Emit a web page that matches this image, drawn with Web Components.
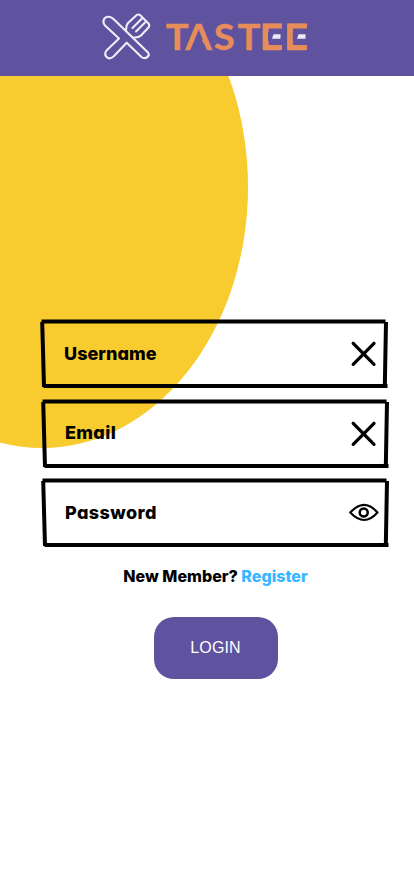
<!DOCTYPE html>
<html lang="en">
<head>
<meta charset="utf-8">
<title>Tastee</title>
<style>
html,body{margin:0;height:100%}
body{background:#fff;overflow:hidden;font-family:Inter,"Liberation Sans",sans-serif;color:#000}
</style>
</head>
<body>
<tastee-page>
  <tastee-header slot="header"></tastee-header>
  <sketch-field icon="cross" style="--x:42px;--inset:22px;--track:.05px">Username</sketch-field>
  <sketch-field icon="cross" style="--x:43px;--inset:22px;--track:.35px">Email</sketch-field>
  <sketch-field icon="eye" style="--x:43px;--inset:22px;--track:.4px">Password</sketch-field>
  <member-prompt slot="footer">New Member? <span slot="link">Register</span></member-prompt>
  <pill-button slot="footer">LOGIN</pill-button>
</tastee-page>
<script>
const define = (name, html, init) => customElements.define(name, class extends HTMLElement {
  constructor() {
    super();
    this.attachShadow({mode: 'open'}).innerHTML = html;
    if (init) init(this, this.shadowRoot);
  }
});

define('tastee-page', `
<style>
:host{display:flex;flex-direction:column;position:relative;width:414px;height:896px;overflow:hidden}
.blob{position:absolute;left:-164px;top:-74px;width:412px;height:522px;border-radius:50%;background:#f8cb2e}
.form{position:relative;display:flex;flex-direction:column;gap:9.7px;margin-top:242.6px}
.foot{position:relative;display:flex;flex-direction:column;align-items:center;gap:30px;margin-top:17.8px;padding-left:17px}
</style>
<div class="blob"></div>
<slot name="header"></slot>
<div class="form"><slot></slot></div>
<div class="foot"><slot name="footer"></slot></div>`);

define('tastee-header', `
<style>
:host{display:block;position:relative;height:75.5px;background:#5f529f}
svg{display:block}
text{font:700 36.5px Lato,sans-serif;fill:#e68d5b;stroke:#e68d5b;stroke-width:.3px}
</style>
<svg width="414" height="75" viewBox="0 0 414 75">
  <g fill="none" stroke="#efedf6" stroke-width="2.1" stroke-linejoin="round" stroke-linecap="round">
    <path d="M104.500 18.500C107 15.500 111 16.500 114 19.500L148 52.500C150.500 56 145.500 60 141.500 57L126.700 42.700L113.500 56.500C108 61 103 55.500 106.500 50.500L119 38.500L105 25.500C103.500 23.500 103 20.500 104.500 18.500Z"/>
    <path d="M126 31.200C126.500 28 125.500 26 128 23L136.500 15.200Q138.500 13.700 140.500 15.500L148.500 23.500Q150 25.500 148.500 27.500L141 35.500C138.500 38 136 37.500 133 37.500M141.500 19L132.500 28M145 22.500L136 31.500"/>
  </g>
  <text transform="scale(1.05 1)" y="49.700" x="157.800 176.500 203.500 226.300 247.600 270.700">TASTEE</text>
  <path d="M198.300 31.500L206.800 51H189.800z" fill="#5f529f"/>
  <path d="M268 32H283v9h-15z M292.300 32H308v9h-15.700z" fill="#5f529f"/>
  <path d="M262.800 23.500h19.200v5h-14v16.500h14v5h-19.200z M287.400 23.500h19.600v5h-14.300v16.500h14.300v5h-19.600z" fill="#e68d5b"/>
  <path d="M273.500 34.200H280.500v4.600h-8.500z M298.500 34.200H305.500v4.600h-8.500z" fill="#ecebf5"/>
</svg>`);

define('sketch-field', `
<style>
:host{display:block;width:348px;height:69.900px;margin-left:calc(var(--x) - 2px)}
.box{position:relative;display:flex;align-items:center;box-sizing:border-box;height:100%;padding:1.500px 12.500px 0 calc(var(--inset) + 2px)}
.frame{position:absolute;left:0;top:0}
label{flex:1;font-size:18px;font-weight:800;letter-spacing:var(--track,-.2px);line-height:22px;font-feature-settings:"cv11"}
.icon{position:absolute;left:calc(347px - var(--x));top:18px}
.icon path,.icon circle{fill:none;stroke:#000}
</style>
<div class="box">
  <svg class="frame" width="348" height="70" viewBox="0 0 348 70" fill="none" stroke="#000" stroke-width="4">
    <path d="M1.500 3.600H345.500M3.500 68H347.500"/><path d="M2.200 4L4 69M346 4L344.800 69"/>
  </svg>
  <label><slot></slot></label>
  <span class="icon"></span>
</div>`, (host, root) => {
  root.querySelector('.icon').innerHTML = host.getAttribute('icon') === 'eye'
    ? '<svg width="36" height="34"><path stroke-width="2.100" d="M5.200 17.500C15 7.300 23.500 7.300 32.500 17.500C23.500 27.500 15 27.500 5.200 17.500Z" stroke-linejoin="round"/><circle cx="18.700" cy="17.500" r="4" stroke-width="2.500"/></svg>'
    : '<svg width="36" height="34"><path stroke-width="3.300" stroke-linecap="round" d="M8.200 7.300L29 28.300M29 7.300L8.200 28.300"/></svg>';
});

define('member-prompt', `
<style>
:host{display:block;font-size:16px;font-weight:800;line-height:22px;letter-spacing:.02px;white-space:nowrap;font-feature-settings:"cv11"}
.link{color:#38b6ff}
</style>
<slot></slot><span class="link"><slot name="link"></slot></span>`);

define('pill-button', `
<style>
:host{display:flex;width:124px;height:62px}
button{flex:1;border:0;padding:0;border-radius:20px;background:#5f529f;color:#fff;font:16px "Liberation Sans",sans-serif;letter-spacing:.1px}
</style>
<button><slot></slot></button>`);
</script>
</body>
</html>
